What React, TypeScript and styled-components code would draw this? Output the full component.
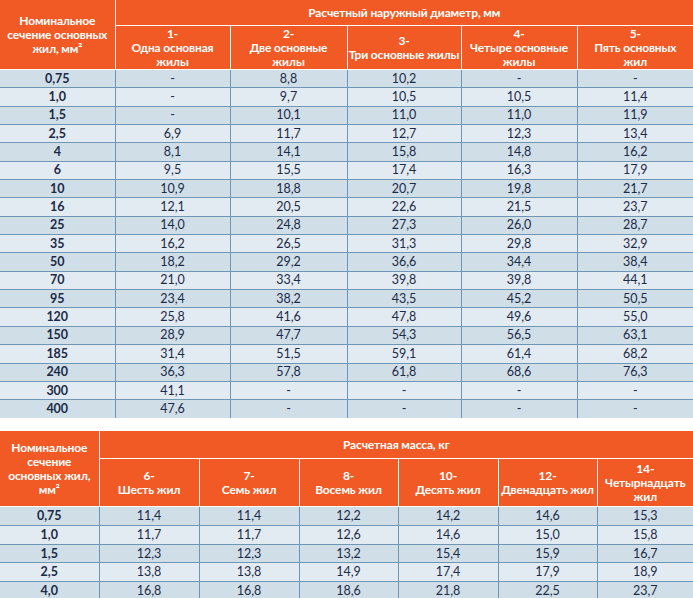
import React from "react";
import styled, { createGlobalStyle } from "styled-components";

const Global = createGlobalStyle`
  html, body { margin: 0; padding: 0; background: #ffffff; }
  body { font-family: Lato, "Open Sans", sans-serif; }
`;

const Page = styled.div`
  width: 693px;
  display: flex;
  flex-direction: column;
  gap: 13px;
`;

const Table = styled.table`
  width: 693px;
  table-layout: fixed;
  border-collapse: collapse;
  border-spacing: 0;
`;

const HeadCell = styled.th<{ $h?: number }>`
  background: #f15a24;
  color: #ffffff;
  font-weight: 700;
  font-size: 12px;
  line-height: 14px;
  letter-spacing: -0.15px;
  text-align: center;
  vertical-align: middle;
  padding: 0;
  white-space: nowrap;
  border: 1px solid #ffffff;
  height: ${(p) => (p.$h ? `${p.$h}px` : "auto")};
  &:first-child { border-left: none; }
  &:last-child { border-right: none; }
`;

const HeadRow = styled.tr`
  &:first-child th { border-top: none; }
`;

const BodyRow = styled.tr<{ $h: number; $odd: boolean }>`
  height: ${(p) => p.$h}px;
  background: ${(p) => (p.$odd ? "#e3ebf2" : "#d0dee8")};
  &:last-child td { border-bottom: none; }
`;

const Cell = styled.td<{ $first?: boolean }>`
  padding: 0;
  text-align: center;
  vertical-align: middle;
  font-size: 12.5px;
  line-height: 14px;
  color: #1b2a47;
  font-weight: ${(p) => (p.$first ? 700 : 400)};
  border: 1px solid #6f97b5;
  border-top: none;
  &:first-child { border-left: none; }
  &:last-child { border-right: none; }
`;

const top = {
  cols: [115, 115, 117, 114, 116, 116],
  title: "Расчетный наружный диаметр, мм",
  heads: [
    ["1-", "Одна основная", "жилы"],
    ["2-", "Две основные", "жилы"],
    ["3-", "Три основные жилы"],
    ["4-", "Четыре основные", "жилы"],
    ["5-", "Пять основных", "жил"],
  ],
  rows: [
    ["0,75", "-", "8,8", "10,2", "-", "-"],
    ["1,0", "-", "9,7", "10,5", "10,5", "11,4"],
    ["1,5", "-", "10,1", "11,0", "11,0", "11,9"],
    ["2,5", "6,9", "11,7", "12,7", "12,3", "13,4"],
    ["4", "8,1", "14,1", "15,8", "14,8", "16,2"],
    ["6", "9,5", "15,5", "17,4", "16,3", "17,9"],
    ["10", "10,9", "18,8", "20,7", "19,8", "21,7"],
    ["16", "12,1", "20,5", "22,6", "21,5", "23,7"],
    ["25", "14,0", "24,8", "27,3", "26,0", "28,7"],
    ["35", "16,2", "26,5", "31,3", "29,8", "32,9"],
    ["50", "18,2", "29,2", "36,6", "34,4", "38,4"],
    ["70", "21,0", "33,4", "39,8", "39,8", "44,1"],
    ["95", "23,4", "38,2", "43,5", "45,2", "50,5"],
    ["120", "25,8", "41,6", "47,8", "49,6", "55,0"],
    ["150", "28,9", "47,7", "54,3", "56,5", "63,1"],
    ["185", "31,4", "51,5", "59,1", "61,4", "68,2"],
    ["240", "36,3", "57,8", "61,8", "68,6", "76,3"],
    ["300", "41,1", "-", "-", "-", "-"],
    ["400", "47,6", "-", "-", "-", "-"],
  ],
};

const bottom = {
  cols: [99, 100, 100, 99, 100, 99, 96],
  title: "Расчетная масса, кг",
  heads: [
    ["6-", "Шесть жил"],
    ["7-", "Семь жил"],
    ["8-", "Восемь жил"],
    ["10-", "Десять жил"],
    ["12-", "Двенадцать жил"],
    ["14-", "Четырнадцать", "жил"],
  ],
  rows: [
    ["0,75", "11,4", "11,4", "12,2", "14,2", "14,6", "15,3"],
    ["1,0", "11,7", "11,7", "12,6", "14,6", "15,0", "15,8"],
    ["1,5", "12,3", "12,3", "13,2", "15,4", "15,9", "16,7"],
    ["2,5", "13,8", "13,8", "14,9", "17,4", "17,9", "18,9"],
    ["4,0", "16,8", "16,8", "18,6", "21,8", "22,5", "23,7"],
  ],
};

type Spec = {
  cols: number[];
  title: string;
  heads: string[][];
  rows: string[][];
};

const Lines = ({ lines }: { lines: string[] }) => (
  <>
    {lines.map((l, i) => (
      <React.Fragment key={i}>
        {i > 0 && <br />}
        {l}
      </React.Fragment>
    ))}
  </>
);

const DataTable = ({
  spec,
  label,
  h1,
  h2,
  rowH,
}: {
  spec: Spec;
  label: string[];
  h1: number;
  h2: number;
  rowH: number;
}) => (
  <Table>
    <colgroup>
      {spec.cols.map((w, i) => (
        <col key={i} style={{ width: w }} />
      ))}
    </colgroup>
    <thead>
      <HeadRow>
        <HeadCell rowSpan={2}>
          <Lines lines={label} />
        </HeadCell>
        <HeadCell colSpan={spec.cols.length - 1} $h={h1}>
          {spec.title}
        </HeadCell>
      </HeadRow>
      <HeadRow>
        {spec.heads.map((h, i) => (
          <HeadCell key={i} $h={h2}>
            <Lines lines={h} />
          </HeadCell>
        ))}
      </HeadRow>
    </thead>
    <tbody>
      {spec.rows.map((r, i) => (
        <BodyRow key={i} $h={rowH} $odd={i % 2 === 1}>
          {r.map((c, j) => (
            <Cell key={j} $first={j === 0}>
              {c}
            </Cell>
          ))}
        </BodyRow>
      ))}
    </tbody>
  </Table>
);

export default function App() {
  return (
    <Page>
      <Global />
      <DataTable
        spec={top}
        label={["Номинальное", "сечение основных", "жил, мм²"]}
        h1={25}
        h2={43}
        rowH={18.35}
      />
      <DataTable
        spec={bottom}
        label={["Номинальное", "сечение", "основных жил,", "мм²"]}
        h1={27}
        h2={47}
        rowH={18.8}
      />
    </Page>
  );
}
